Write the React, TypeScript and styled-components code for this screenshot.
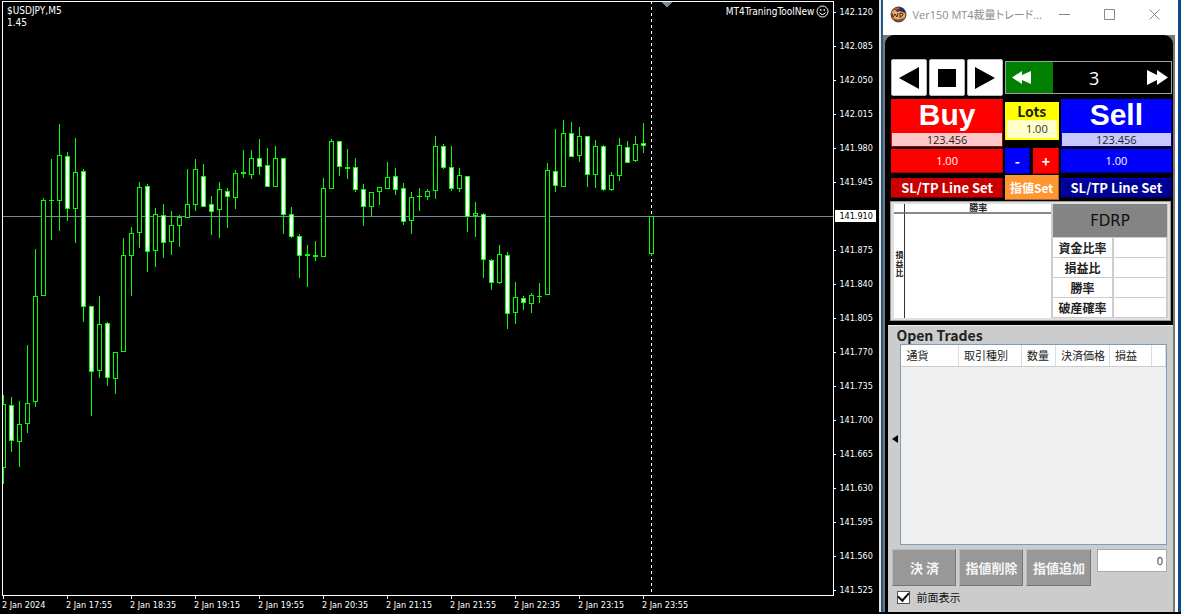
import React, { useState } from "react";
import styled, { createGlobalStyle } from "styled-components";

const Global = createGlobalStyle`
  * { box-sizing: border-box; }
  body { margin: 0; background: #000; }
  button, input { font: inherit; margin: 0; }
  button { cursor: pointer; }
`;

const latin = `"Open Sans", "Noto Sans CJK JP", sans-serif`;
const gothic = `"Noto Sans CJK JP", sans-serif`;
const terminal = `"DejaVu Sans Condensed", "DejaVu Sans", sans-serif`;

/* ---------- chart ---------- */

type Candle = [high: number, top: number, bottom: number, low: number, bearish: 0 | 1];

const candles: Candle[] = [
  [395, 404, 468, 484, 0], [397, 405, 441, 452, 1], [401, 424, 442, 467, 0], [345, 403, 424, 433, 0],
  [249, 296, 402, 407, 0], [198, 200, 296, 296, 0], [159, 200, 201, 240, 0], [124, 155, 201, 231, 0],
  [152, 156, 209, 221, 1], [138, 172, 209, 243, 0], [169, 171, 307, 322, 1], [306, 306, 372, 416, 1],
  [296, 324, 371, 378, 0], [322, 323, 378, 386, 1], [352, 352, 379, 394, 0], [238, 255, 352, 352, 0],
  [227, 233, 256, 296, 0], [182, 187, 233, 248, 0], [184, 186, 252, 272, 1], [208, 214, 251, 267, 0],
  [204, 215, 243, 258, 1], [211, 225, 242, 255, 0], [215, 217, 226, 247, 0], [169, 204, 218, 218, 0],
  [159, 169, 205, 211, 0], [164, 176, 207, 207, 1], [196, 204, 212, 235, 1], [182, 189, 210, 238, 0],
  [188, 191, 197, 228, 1], [170, 173, 198, 209, 0], [150, 172, 174, 178, 0], [150, 158, 175, 179, 0],
  [139, 158, 167, 175, 1], [148, 165, 187, 187, 1], [146, 158, 187, 187, 0], [158, 158, 215, 234, 1],
  [207, 214, 237, 238, 1], [234, 236, 256, 278, 1], [245, 254, 256, 287, 0], [241, 255, 257, 261, 0],
  [178, 188, 257, 257, 0], [139, 141, 189, 189, 0], [141, 141, 167, 176, 1], [149, 167, 169, 179, 0],
  [158, 167, 190, 192, 1], [184, 189, 207, 226, 1], [192, 192, 207, 216, 0], [187, 187, 192, 205, 0],
  [162, 177, 189, 189, 0], [168, 176, 190, 195, 1], [183, 188, 222, 225, 1], [192, 197, 221, 234, 0],
  [188, 196, 197, 211, 0], [189, 191, 197, 200, 0], [136, 146, 191, 199, 0], [144, 146, 168, 169, 1],
  [146, 167, 189, 191, 1], [168, 175, 189, 192, 0], [176, 176, 217, 232, 1], [202, 213, 216, 237, 0],
  [213, 214, 260, 278, 1], [259, 260, 283, 290, 1], [245, 254, 283, 284, 0], [252, 255, 314, 329, 1],
  [282, 297, 313, 324, 0], [296, 298, 303, 310, 1], [293, 295, 304, 313, 0], [283, 296, 297, 303, 0],
  [163, 170, 295, 295, 0], [129, 171, 186, 192, 1], [120, 133, 187, 187, 0], [122, 133, 157, 157, 1],
  [127, 136, 156, 162, 0], [136, 136, 175, 187, 1], [140, 146, 175, 188, 0], [145, 146, 190, 191, 1],
  [172, 175, 190, 191, 0], [138, 145, 176, 181, 0], [141, 147, 163, 163, 1], [136, 144, 161, 162, 0],
  [123, 143, 146, 153, 1], [216, 216, 254, 256, 0],
];

const prices = Array.from({ length: 18 }, (_, i) => (142.12 - i * 0.035).toFixed(3));
const times = ["2024", "17:55", "18:35", "19:15", "19:55", "20:35", "21:15", "21:55", "22:35", "23:15", "23:55"];

const Screen = styled.main`
  display: flex;
  min-height: 100vh;
  padding-bottom: 2px;
  background: #000;
`;

const Chart = styled.section`
  flex: 1;
  min-width: 0;
  display: grid;
  grid-template-columns: minmax(0, 1fr) 45px;
  grid-template-rows: minmax(0, 1fr) 16px;
  padding-left: 2px;
  color: #fff;
  font: 9px/12px ${terminal};
  overflow: hidden;
`;

const Plot = styled.div`
  position: relative;
  margin-top: 1px;
  border: 1px solid #fff;
  overflow: hidden;
`;

const Candles = styled.svg`
  position: absolute;
  inset: 0;
  width: 100%;
  height: 100%;
`;

const PlotHeader = styled.header`
  position: relative;
  display: flex;
  justify-content: space-between;
  padding: 3px 4px;
  font-size: 10px;
`;

const Expert = styled.span`
  display: flex;
  align-items: center;
  gap: 2px;
  height: 13px;
`;

const PriceAxis = styled.ol`
  list-style: none;
  margin: 0;
  padding: 6px 0 0;
  display: flex;
  flex-direction: column;
  gap: 22px;
`;

const Price = styled.li<{ $current: boolean }>`
  display: flex;
  align-items: center;
  gap: 3px;
  height: 12px;
  width: 41px;
  padding-left: ${(p) => (p.$current ? 4 : 0)}px;
  margin-left: ${(p) => (p.$current ? 1 : 0)}px;
  color: ${(p) => (p.$current ? "#000" : "#fff")};
  background: ${(p) => (p.$current ? "#fff" : "none")};
  &::before {
    content: "";
    display: ${(p) => (p.$current ? "none" : "block")};
    width: 2px;
    height: 1px;
    background: #fff;
  }
`;

const TimeAxis = styled.ol`
  grid-column: 1 / -1;
  list-style: none;
  margin: 0;
  padding: 0;
  display: flex;
`;

const Time = styled.li`
  flex: 0 0 64px;
  white-space: nowrap;
  &::before {
    content: "";
    display: block;
    width: 1px;
    height: 3px;
    margin-left: 1px;
    background: #fff;
  }
`;

function CandleChart() {
  return (
    <Candles aria-label="USDJPY candles" shapeRendering="crispEdges">
      <g transform="translate(-3 -2)">
        <path d="M661 2h11l-5 5h-1z" fill="#778899" />
        <path d="M651.5 1V592" stroke="#fff" strokeDasharray="3 3" />
        <rect x="3" y="216" width="100%" height="1" fill="#778899" />
        {candles.map(([high, top, bottom, low, bearish], i) => {
          const x = 3 + i * 8;
          return (
            <g key={i}>
              <rect x={x} y={high} width="1" height={low - high} fill="#0f0" />
              <rect x={x - 2} y={top} width="5" height={bottom - top} fill="#0f0" />
              {bottom - top > 2 && (
                <rect x={x - 1} y={top + 1} width="3" height={bottom - top - 2} fill={bearish ? "#fff" : "#000"} />
              )}
            </g>
          );
        })}
      </g>
    </Candles>
  );
}

/* ---------- trade window ---------- */

const Window = styled.aside`
  flex: 0 0 301px;
  display: flex;
  flex-direction: column;
  border-style: solid;
  border-width: 0 3px 0 2px;
  border-color: #0a4a8a #0a4a8a #0a4a8a #e4e4e4;
  background: #fff;
  box-shadow: inset 2px 0 #245884;
  padding: 0 2px;
  font: 11px/14px ${latin};
`;

const TitleBar = styled.header`
  display: flex;
  align-items: center;
  height: 35px;
  padding: 0 4px 6px 7px;
  color: #8c8c8c;
  font-size: 11px;
`;

const Title = styled.h1`
  flex: 1;
  min-width: 0;
  margin: 0 0 0 5px;
  font: inherit;
  font-feature-settings: "palt";
  white-space: nowrap;
`;

const WindowButton = styled.button`
  display: grid;
  place-items: center;
  width: 45px;
  height: 28px;
  padding: 0;
  border: 0;
  background: none;
`;

const WindowButtons = styled.div`
  display: flex;
  margin-right: -5px;
`;

const Frame = styled.div`
  flex: 1;
  display: flex;
  flex-direction: column;
  margin-right: 1px;
  background: #777;
  padding: 0 2px;
`;

const Board = styled.div`
  flex: 1;
  display: flex;
  flex-direction: column;
  padding-top: 24px;
  border-radius: 9px 9px 0 0;
  background: #000;
`;

const Transport = styled.div`
  display: grid;
  grid-template-columns: 36px 36px 36px 1fr;
  align-items: center;
  gap: 2px;
  padding: 0 1px 0 6px;
  height: 37px;
`;

const TransportButton = styled.button`
  display: grid;
  place-items: center;
  height: 37px;
  padding: 0;
  border: 1px solid #bbb;
  border-radius: 2px;
  background: #fff;
`;

const Speed = styled.div`
  display: grid;
  grid-template-columns: 47px 1fr 36px;
  align-items: center;
  height: 33px;
  border: 1px solid #a0a0a0;
  color: #fff;
  font-size: 18px;
  line-height: 24px;
  text-align: center;
`;

const SpeedButton = styled.button<{ $fill?: string }>`
  height: 31px;
  padding: 0 3px 0 6px;
  border: 0;
  background: ${(p) => p.$fill ?? "none"};
  display: flex;
  align-items: center;
  justify-content: ${(p) => (p.$fill ? "flex-start" : "flex-end")};
`;

const Orders = styled.div`
  display: grid;
  grid-template-columns: 1fr 54px 1fr;
  grid-template-rows: 48px 28px 25px;
  align-items: center;
  column-gap: 2px;
  padding: 3px 1px 1px 6px;
`;

const OrderButton = styled.button<{ $fill: string; $tint: string }>`
  display: flex;
  flex-direction: column;
  height: 48px;
  padding: 0;
  border: 1px outset ${(p) => p.$fill};
  background: ${(p) => p.$fill};
  color: #fff;
  small {
    margin-top: auto;
    width: 100%;
    background: ${(p) => p.$tint};
    color: #222;
    font: 11px/13px ${latin};
  }
`;

const Side = styled.span`
  width: 100%;
  font: 700 30px/30px "Liberation Sans", sans-serif;
`;

const LotsBox = styled.label`
  align-self: start;
  display: flex;
  flex-direction: column;
  height: 38px;
  margin-top: 3px;
  padding: 1px 2px 2px;
  background: #ff0;
  color: #222;
  text-align: center;
  font: 700 14px/17px ${gothic};
`;

const LotsInput = styled.input`
  width: 100%;
  height: 18px;
  padding: 0 9px;
  border: 0;
  background: #ffc;
  color: #333;
  text-align: right;
  && { font: 11px/18px ${latin}; }
`;

const FlatButton = styled.button<{ $fill: string; $h: number; $bold?: number }>`
  height: ${(p) => p.$h}px;
  padding: 0;
  border: 1px outset ${(p) => p.$fill};
  background: ${(p) => p.$fill};
  color: #fff;
  white-space: nowrap;
  && { font: ${(p) => (p.$bold ? `700 ${p.$bold}px/14px ${gothic}` : `11px/14px ${latin}`)}; }
`;

const Stepper = styled.div`
  display: grid;
  grid-template-columns: 1fr 1fr;
  gap: 3px;
`;

const Stats = styled.section`
  display: grid;
  grid-template-columns: 11px minmax(0, 1fr) 117px;
  grid-template-rows: 10px 1fr;
  margin: 0 2px 0 5px;
  padding: 2px 2px 2px 3px;
  height: 120px;
  border: 1px solid #999;
  background: #e0e0e0;
  color: #222;
  font-family: ${gothic};
`;

const Corner = styled.div`
  background: #fff;
  border-right: 1px solid #333;
  border-bottom: 2px solid #888;
`;

const TopLabel = styled.div`
  background: #fff;
  border-bottom: 2px solid #888;
  font-size: 9px;
  font-weight: 700;
  line-height: 8px;
  text-align: center;
`;

const SideLabel = styled.div`
  display: flex;
  flex-direction: column;
  align-items: center;
  justify-content: center;
  padding-bottom: 6px;
  background: #fff;
  border-right: 1px solid #333;
  font-size: 8px;
  font-weight: 700;
  line-height: 9px;
`;

const Field = styled.div`
  background: #fff;
`;

const Ratios = styled.table`
  grid-area: 1 / 3 / 3 / 4;
  width: 100%;
  border-collapse: separate;
  border-spacing: 2px 1px;
  background: #ccc;
  caption {
    background: #848484;
    border: solid #ccc;
    border-width: 0 1px 0 2px;
    height: 33px;
    color: #111;
    font: 15px/35px "DejaVu Sans", sans-serif;
  }
  th {
    width: 59px;
    height: 19px;
    padding: 0;
    background: #fff;
    font-size: 12px;
    line-height: 18px;
  }
  td { padding: 0; background: #fff; }
`;

const Trades = styled.section`
  flex: 1;
  display: flex;
  flex-direction: column;
  margin: 4px 0 0 3px;
  padding: 1px 6px 8px 4px;
  background: #ccc;
  border-top: 1px solid #eee;
`;

const TradesTitle = styled.h2`
  margin: 0 0 0 4px;
  color: #222;
  font: 700 14px/17px ${gothic};
`;

const ListRow = styled.div`
  flex: 1;
  display: flex;
  align-items: center;
`;

const Collapse = styled.button`
  width: 8px;
  padding: 0 0 12px;
  border: 0;
  background: none;
  display: flex;
`;

const List = styled.div`
  flex: 1;
  align-self: stretch;
  border: 1px solid #7f9db9;
  background: #efefef;
`;

const TradeTable = styled.table`
  width: 100%;
  table-layout: fixed;
  border-collapse: collapse;
  th {
    height: 21px;
    padding: 0 0 0 5px;
    border-right: 1px solid #ddd;
    border-bottom: 1px solid #ccc;
    background: #fff;
    color: #222;
    font: 400 11px/20px ${gothic};
    text-align: left;
    white-space: nowrap;
  }
`;

const Actions = styled.div`
  display: grid;
  grid-template-columns: 64px 64px 65px 1fr;
  gap: 3px;
  margin-top: 4px;
`;

const ActionButton = styled.button`
  height: 37px;
  padding: 0;
  border: 1px solid;
  border-color: #bbb #777 #777 #bbb;
  background: #989898;
  color: #f4f4f4;
  white-space: nowrap;
  && { font: 700 13px/18px ${gothic}; }
`;

const Amount = styled.input`
  width: 70px;
  height: 23px;
  margin-left: auto;
  padding: 0 3px;
  border: 1px solid #aaa;
  background: #fff;
  color: #333;
  text-align: right;
`;

const Front = styled.label`
  display: flex;
  align-items: center;
  gap: 6px;
  margin: 4px 0 0 5px;
  color: #111;
  font-family: ${gothic};
`;

const Check = styled.input`
  appearance: none;
  width: 13px;
  height: 13px;
  border: 1px solid #555;
  background: #fff;
  display: grid;
  place-items: center;
  &:checked::after {
    content: "";
    width: 9px;
    height: 5px;
    margin-top: -3px;
    border: solid #111;
    border-width: 0 0 2px 2px;
    transform: rotate(-48deg);
  }
`;

const columns: [string, number][] = [["通貨", 57], ["取引種別", 63], ["数量", 34], ["決済価格", 54], ["損益", 42]];

function AppIcon() {
  return (
    <svg width="17" height="17" viewBox="0 0 17 17" aria-hidden="true">
      <circle cx="8.500" cy="8.500" r="7.500" fill="#b5713a" stroke="#5d3524" />
      <path d="M5 4Q8 -1 14 3L15.500 7L10 6L7 6Z" fill="#1d2f63" />
      <path d="M1.500 6L5 4L7 6L10 5L15 7L15 11L11 13L6 13L2 10Z" fill="#e8ac62" />
      <path d="M2 7l1 4 2-3 2 3 1-4M10 12V7q4 0 3 2t-3 1" stroke="#542414" fill="none" />
      <path d="M5 3l3-1.500 2 1-3 2z" fill="#d04a32" />
      <path d="M4 14q5 2.500 9-1" stroke="#3b3a5c" fill="none" />
    </svg>
  );
}

export default function App() {
  const [lots, setLots] = useState("1.00");
  const [amount, setAmount] = useState("0");
  const [front, setFront] = useState(true);

  return (
    <Screen>
      <Global />
      <Chart>
        <Plot>
          <CandleChart />
          <PlotHeader>
            <span>$USDJPY,M5<br />1.45</span>
            <Expert>
              MT4TraningToolNew
              <svg width="13" height="13" viewBox="0 0 13 13" fill="none" stroke="#fff" aria-hidden="true">
                <circle cx="6.500" cy="6.500" r="5.500" />
                <path d="M3.500 7.500Q6.500 11.500 9.500 7.500" />
                <path d="M4 5h1.500M7.500 5H9" strokeWidth="1.500" />
              </svg>
            </Expert>
          </PlotHeader>
        </Plot>
        <PriceAxis>
          {prices.map((p) => <Price key={p} $current={p === "141.910"}>{p}</Price>)}
        </PriceAxis>
        <TimeAxis>
          {times.map((t) => <Time key={t}>2 Jan {t}</Time>)}
        </TimeAxis>
      </Chart>

      <Window>
        <TitleBar>
          <AppIcon />
          <Title>Ver150 MT4裁量トレード...</Title>
          <WindowButtons>
            <WindowButton aria-label="Minimize">
              <svg width="11" height="11" stroke="#888"><path d="M0 5.500H11" /></svg>
            </WindowButton>
            <WindowButton aria-label="Maximize">
              <svg width="11" height="11" stroke="#888" fill="none"><path d="M.5 .5h10v10h-10z" /></svg>
            </WindowButton>
            <WindowButton aria-label="Close">
              <svg width="11" height="11" stroke="#888"><path d="M.5 .5l10 10M10.500 .5l-10 10" /></svg>
            </WindowButton>
          </WindowButtons>
        </TitleBar>
        <Frame>
          <Board>
            <Transport>
              <TransportButton aria-label="Back">
                <svg width="20" height="22"><path d="M20 0V22L0 11z" /></svg>
              </TransportButton>
              <TransportButton aria-label="Stop">
                <svg width="20" height="20"><path d="M1 1h18v18H1z" /></svg>
              </TransportButton>
              <TransportButton aria-label="Play">
                <svg width="20" height="22"><path d="M0 0V22L20 11z" /></svg>
              </TransportButton>
              <Speed>
                <SpeedButton $fill="#008000" aria-label="Slower">
                  <svg width="19" height="13" fill="#fff"><path d="M10 0V4L19 0V13L10 9V13L0 6.500z" /></svg>
                </SpeedButton>
                <span>3</span>
                <SpeedButton aria-label="Faster">
                  <svg width="21" height="15" fill="#fff"><path d="M0 0L10 5V0L21 7.500L10 15V10L0 15z" /></svg>
                </SpeedButton>
              </Speed>
            </Transport>

            <Orders>
              <OrderButton $fill="#ff0000" $tint="#ffc8c8"><Side>Buy</Side><small>123.456</small></OrderButton>
              <LotsBox>
                Lots
                <LotsInput value={lots} onChange={(e) => setLots(e.target.value)} />
              </LotsBox>
              <OrderButton $fill="#0000ff" $tint="#c8c8ff"><Side>Sell</Side><small>123.456</small></OrderButton>
              <FlatButton $fill="#ff0000" $h={24}>1.00</FlatButton>
              <Stepper>
                <FlatButton $fill="#0000ff" $h={26} $bold={14}>-</FlatButton>
                <FlatButton $fill="#ff0000" $h={26} $bold={14}>+</FlatButton>
              </Stepper>
              <FlatButton $fill="#0000ff" $h={24}>1.00</FlatButton>
              <FlatButton $fill="#c80000" $h={20} $bold={13}>SL/TP Line Set</FlatButton>
              <FlatButton $fill="#ff9632" $h={25} $bold={12}>指値Set</FlatButton>
              <FlatButton $fill="#000096" $h={20} $bold={13}>SL/TP Line Set</FlatButton>
            </Orders>

            <Stats>
              <Corner />
              <TopLabel>勝率</TopLabel>
              <SideLabel><span>損</span><span>益</span><span>比</span></SideLabel>
              <Field />
              <Ratios>
                <caption>FDRP</caption>
                <tbody>
                  {["資金比率", "損益比", "勝率", "破産確率"].map((r) => (
                    <tr key={r}><th scope="row">{r}</th><td /></tr>
                  ))}
                </tbody>
              </Ratios>
            </Stats>

            <Trades>
              <TradesTitle>Open Trades</TradesTitle>
              <ListRow>
                <Collapse aria-label="Collapse">
                  <svg width="6" height="8"><path d="M6 0V8L0 4z" /></svg>
                </Collapse>
                <List>
                  <TradeTable>
                    <colgroup>
                      {columns.map(([name, w]) => <col key={name} width={w} />)}
                      <col />
                    </colgroup>
                    <thead>
                      <tr>
                        {columns.map(([name]) => <th key={name} scope="col">{name}</th>)}
                        <th aria-label="Spare" />
                      </tr>
                    </thead>
                  </TradeTable>
                </List>
              </ListRow>
              <Actions>
                <ActionButton>決 済</ActionButton>
                <ActionButton>指値削除</ActionButton>
                <ActionButton>指値追加</ActionButton>
                <Amount aria-label="Amount" value={amount} onChange={(e) => setAmount(e.target.value)} />
              </Actions>
              <Front>
                <Check type="checkbox" checked={front} onChange={(e) => setFront(e.target.checked)} />
                前面表示
              </Front>
            </Trades>
          </Board>
        </Frame>
      </Window>
    </Screen>
  );
}
